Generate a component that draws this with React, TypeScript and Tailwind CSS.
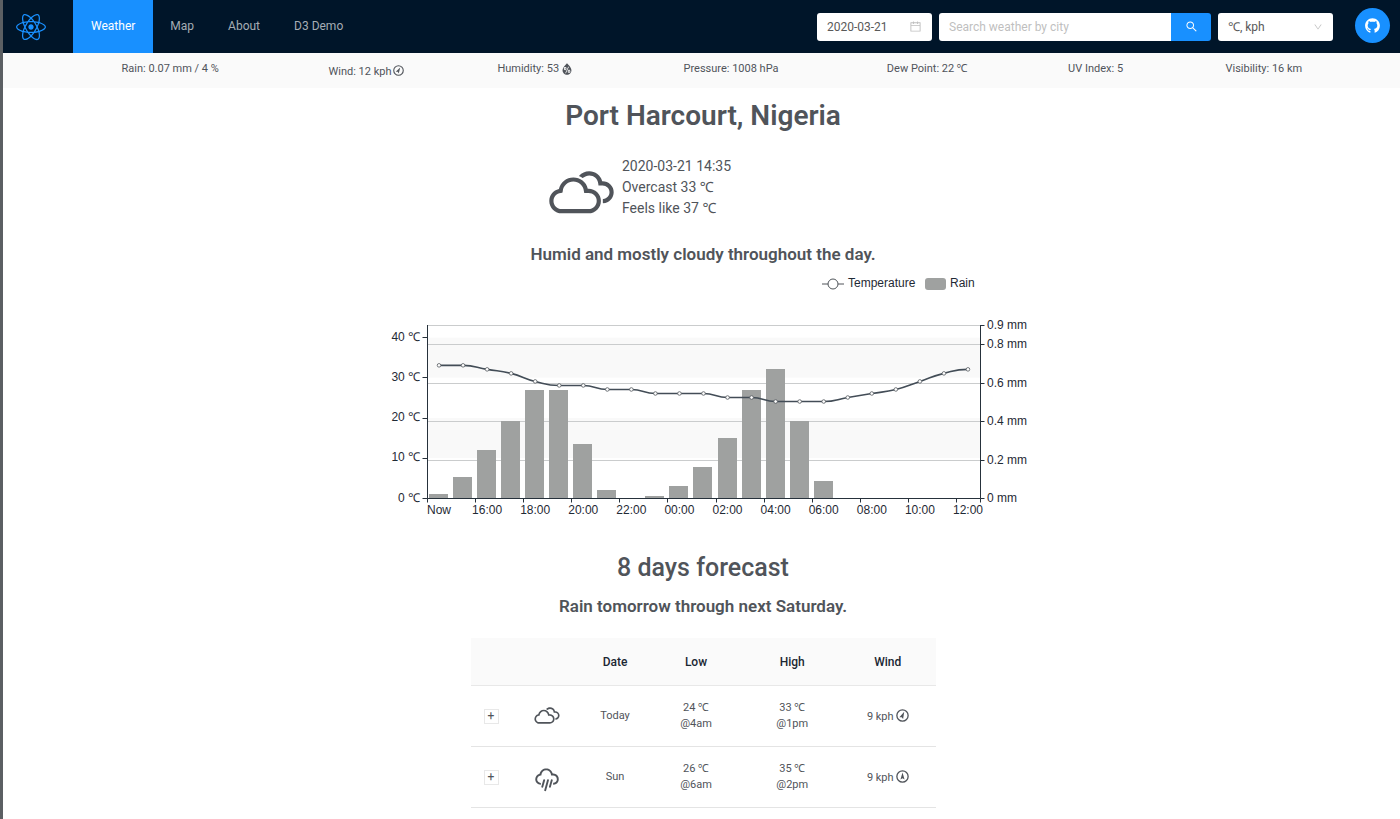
import React from 'react';
import { WiCloudy, WiRain, WiHumidity } from 'react-icons/wi';
import { FaReact } from 'react-icons/fa';
import { AiOutlineCalendar, AiOutlineSearch, AiOutlineDown, AiFillGithub } from 'react-icons/ai';

const temperatures = [33, 33, 32, 31, 29, 28, 28, 27, 27, 26, 26, 26, 25, 25, 24, 24, 24, 25, 26, 27, 29, 31, 32];
const rain = [0.02, 0.11, 0.25, 0.4, 0.56, 0.56, 0.28, 0.04, 0, 0.01, 0.06, 0.16, 0.31, 0.56, 0.67, 0.4, 0.09, 0, 0, 0, 0, 0, 0];
const hours = ['Now', '16:00', '18:00', '20:00', '22:00', '00:00', '02:00', '04:00', '06:00', '08:00', '10:00', '12:00'];

function WindDial({ angle, className }: { angle: number; className: string }) {
  return (
    <svg viewBox="0 0 24 24" className={className} aria-hidden="true">
      <circle cx="12" cy="12" r="10.4" fill="none" stroke="currentColor" strokeWidth="2.4" />
      <path d="M12 4.5 L15.8 17.5 L12 15.4 L8.2 17.5 Z" fill="currentColor" transform={`rotate(${angle} 12 12)`} />
    </svg>
  );
}

const navItems = ['Weather', 'Map', 'About', 'D3 Demo'];

function Header() {
  return (
    <header className="flex h-[53px] items-center bg-[#001529] text-[12px]">
      <a href="#home" aria-label="Home" className="flex w-[70px] shrink-0 pl-[13px] text-[#1890ff]">
        <FaReact className="size-[30px]" />
      </a>
      <nav className="flex h-full">
        {navItems.map((item, i) => (
          <a
            key={item}
            href={`#${item}`}
            className={
              i === 0
                ? 'flex items-center bg-[#1890ff] px-[18px] pb-px text-white'
                : 'flex items-center px-[17px] pb-px text-[#a6adb4]'
            }
          >
            {item}
          </a>
        ))}
      </nav>
      <div className="ml-auto flex items-center gap-[7px] pr-[10px] text-[12px] text-[#595959]">
        <label className="flex h-7 w-[115px] items-center rounded-[3px] bg-white px-[10px]">
          <input aria-label="Date" defaultValue="2020-03-21" className="w-full min-w-0 outline-none" />
          <AiOutlineCalendar className="size-[13px] shrink-0 text-[#bfbfbf]" />
        </label>
        <form className="flex h-7 w-[272px]" onSubmit={(e) => e.preventDefault()}>
          <input
            aria-label="Search weather by city"
            placeholder="Search weather by city"
            className="min-w-0 flex-1 rounded-l-[3px] bg-white px-[10px] outline-none placeholder:text-[#bfbfbf]"
          />
          <button aria-label="Search" className="flex w-10 items-center justify-center rounded-r-[3px] bg-[#1890ff] text-white">
            <AiOutlineSearch className="size-[13px]" />
          </button>
        </form>
        <div className="grid h-7 w-[115px] items-center rounded-[3px] bg-white">
          <select aria-label="Units" className="col-start-1 row-start-1 h-full w-full appearance-none px-[10px] outline-none">
            <option>℃, kph</option>
            <option>℉, mph</option>
          </select>
          <AiOutlineDown className="pointer-events-none col-start-1 row-start-1 mr-[10px] size-[10px] justify-self-end text-[#bfbfbf]" />
        </div>
        <a href="#github" aria-label="GitHub" className="mb-[3px] ml-[15px] flex size-[35px] items-center justify-center rounded-full bg-[#1890ff] text-white">
          <AiFillGithub className="size-[17px]" />
        </a>
      </div>
    </header>
  );
}

function Conditions() {
  return (
    <section className="grid h-[35px] grid-cols-[4fr_3fr_3fr_4fr_3fr_3fr_3fr] bg-[#fafafa] pt-[6px] pr-[52px] pl-[55px] text-center text-[11px] leading-5">
      <div>Rain: 0.07 mm / 4 %</div>
      <div className="flex h-[25px] items-center justify-center gap-[2px]">
        Wind: 12 kph <WindDial angle={30} className="mb-[2px] size-[11px]" />
      </div>
      <div className="flex h-5 items-center justify-center">
        Humidity: 53 <WiHumidity className="-mr-1 -ml-px size-[18px]" />
      </div>
      <div>Pressure: 1008 hPa</div>
      <div>Dew Point: 22 ℃</div>
      <div>UV Index: 5</div>
      <div>Visibility: 16 km</div>
    </section>
  );
}

const LEFT = 47.5;
const RIGHT = 600.5;
const BASE = 228.5;
const BAND = (RIGHT - LEFT) / 23;
const tempY = (t: number) => BASE - t * 4.02;
const rainY = (mm: number) => Math.round(BASE - 0.5 - mm * 192.2) + 0.5;

function smoothLine(points: number[][]) {
  let d = `M${points[0][0]} ${points[0][1]}`;
  for (let i = 1; i < points.length; i++) {
    const [x0, y0] = points[i - 1];
    const [x1, y1] = points[i];
    const mid = (x0 + x1) / 2;
    const before = points[i - 2] ?? points[i - 1];
    const after = points[i + 1] ?? points[i];
    const s0 = (y1 - before[1]) * (y1 === y0 || before[1] === y0 ? 0 : 0.25);
    const s1 = (after[1] - y0) * (y1 === y0 || after[1] === y1 ? 0 : 0.25);
    d += ` C${mid} ${y0 + s0} ${mid} ${y1 - s1} ${x1} ${y1}`;
  }
  return d;
}

function Chart() {
  const points = temperatures.map((t, i) => [LEFT + BAND * (i + 0.5) - 0.5, tempY(t) - 0.5]);
  return (
    <svg
      viewBox="0 0 650 260"
      role="img"
      aria-label="Temperature and rain by hour"
      className="mt-1 ml-1 h-[260px] w-[650px] fill-[#1f2a35] font-['Liberation_Sans',Arial,'Noto_Sans',sans-serif] text-[12px]"
    >
      <path d="M442 14H464" stroke="#50555a" />
      <circle cx="453" cy="14" r="5" fill="#fff" stroke="#50555a" />
      <text x="468" y="17">Temperature</text>
      <rect x="545" y="8" width="21" height="12" rx="3" fill="#9fa1a0" />
      <text x="570" y="17">Rain</text>

      <rect x={LEFT} y={tempY(40)} width={RIGHT - LEFT} height="40" fill="#f9f9f9" />
      <rect x={LEFT} y={tempY(20)} width={RIGHT - LEFT} height="40" fill="#f9f9f9" />
      {[0.2, 0.4, 0.6, 0.8, 0.9].map((mm) => (
        <path key={mm} d={`M${LEFT} ${rainY(mm)}H${RIGHT}`} stroke="#cacccd" />
      ))}
      {rain.map((mm, i) =>
        mm > 0 ? (
          <rect key={i} x={Math.floor(LEFT + BAND * i + 2)} y={rainY(mm) - 0.5} width="19" height={BASE - rainY(mm) + 0.5} fill="#9fa1a0" />
        ) : null,
      )}
      <path d={`M${LEFT} 55V${BASE}H${RIGHT}V55`} fill="none" stroke="#26313b" />
      {[0, 10, 20, 30, 40].map((t) => (
        <g key={t}>
          <path d={`M${LEFT - 5} ${Math.round(tempY(t) - 0.5) + 0.5}H${LEFT}`} stroke="#26313b" />
          <text x="40" y={Math.round(tempY(t) + 3)} textAnchor="end">{`${t} ℃`}</text>
        </g>
      ))}
      {[0, 0.2, 0.4, 0.6, 0.8, 0.9].map((mm) => (
        <g key={mm}>
          <path d={`M${RIGHT} ${rainY(mm)}h4`} stroke="#26313b" />
          <text x="607" y={Math.round(rainY(mm) + 3)}>{`${mm} mm`}</text>
        </g>
      ))}
      {hours.map((hour, i) => (
        <g key={hour}>
          <path d={`M${Math.round(LEFT + BAND * 2 * i - 0.5) + 0.5} ${BASE}v4`} stroke="#26313b" />
          <text x={LEFT + BAND * (2 * i + 0.5) - 0.5} y="244" textAnchor="middle">{hour}</text>
        </g>
      ))}
      <path d={`M${RIGHT} ${BASE}v4`} stroke="#26313b" />
      <path d={smoothLine(points)} fill="none" stroke="#434d57" strokeWidth="1.6" />
      {points.map(([x, y]) => (
        <circle key={x} cx={x} cy={y} r="1.8" fill="#fff" stroke="#555b60" strokeWidth="0.8" />
      ))}
    </svg>
  );
}

const days = [
  { day: 'Today', Icon: WiCloudy, low: '24 ℃', lowAt: '@4am', high: '33 ℃', highAt: '@1pm', wind: '9 kph', angle: 25 },
  { day: 'Sun', Icon: WiRain, low: '26 ℃', lowAt: '@6am', high: '35 ℃', highAt: '@2pm', wind: '9 kph', angle: 0 },
];

function Forecast() {
  return (
    <table className="w-[465px] table-fixed border-separate border-spacing-0 text-center text-[11px] leading-4">
      <thead>
        <tr className="h-12 bg-[#fafafa] text-[12px] text-[#1b2733]">
          <th aria-label="Expand" className="w-[41px] border-b border-[#e8e8e8]" />
          <th aria-label="Conditions" className="w-[71px] border-b border-[#e8e8e8]" />
          <th className="w-[65px] border-b border-[#e8e8e8] font-medium">Date</th>
          <th className="w-[97px] border-b border-[#e8e8e8] font-medium">Low</th>
          <th className="border-b border-[#e8e8e8] font-medium">High</th>
          <th className="border-b border-[#e8e8e8] font-medium">Wind</th>
        </tr>
      </thead>
      <tbody>
        {days.map(({ day, Icon, low, lowAt, high, highAt, wind, angle }) => (
          <tr key={day} className="h-[61px]">
            <td className="border-b border-[#e4e4e4]">
              <button aria-label={`Expand ${day}`} className="mx-auto flex size-[15px] items-center justify-center border border-[#e8e8e8] pb-px text-[12px]">
                +
              </button>
            </td>
            <td className="border-b border-[#e4e4e4]">
              <Icon className="mx-auto size-[34px]" />
            </td>
            <td className="border-b border-[#e4e4e4]">{day}</td>
            <td className="border-b border-[#e4e4e4]">{low}<br />{lowAt}</td>
            <td className="border-b border-[#e4e4e4]">{high}<br />{highAt}</td>
            <td className="border-b border-[#e4e4e4]">
              <span className="flex items-center justify-center gap-[2px] pt-[2px]">
                {wind} <WindDial angle={angle} className="mb-1 size-[13px]" />
              </span>
            </td>
          </tr>
        ))}
      </tbody>
    </table>
  );
}

export default function App() {
  return (
    <div className="min-h-screen border-l-[3px] border-[#5b5f63] bg-white font-[Roboto,'Noto_Sans',sans-serif] text-[#50545a]">
      <Header />
      <Conditions />
      <main className="flex flex-col items-center pl-[3px]">
        <h1 className="mt-[10px] text-[28px] leading-9 font-semibold">Port Harcourt, Nigeria</h1>
        <section className="mt-4 mr-[137px] flex items-start">
          <WiCloudy className="size-[87px]" />
          <div className="mt-[6px] -ml-[3px] text-[14px] leading-[21px]">
            <p>2020-03-21 14:35</p>
            <p>Overcast 33 ℃</p>
            <p>Feels like 37 ℃</p>
          </div>
        </section>
        <h2 className="mt-[5px] text-[17px] leading-6 font-semibold">Humid and mostly cloudy throughout the day.</h2>
        <Chart />
        <h2 className="mt-5 text-[25px] leading-9 font-medium">8 days forecast</h2>
        <h3 className="mt-2 mb-5 text-[17px] leading-6 font-semibold">Rain tomorrow through next Saturday.</h3>
        <Forecast />
      </main>
    </div>
  );
}
